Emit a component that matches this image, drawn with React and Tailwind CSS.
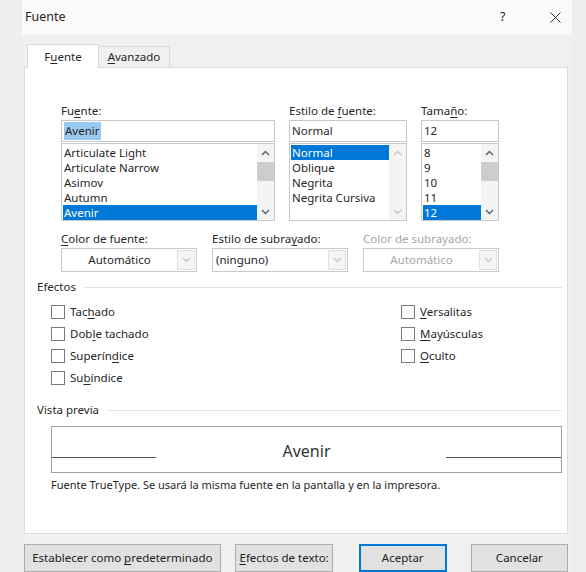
import { useState } from 'react'

// Diálogo "Fuente" estilo Word: listas, desplegables, efectos y vista previa.

const fuentes = ['Articulate Light', 'Articulate Narrow', 'Asimov', 'Autumn', 'Avenir']
const estilos = ['Normal', 'Oblique', 'Negrita', 'Negrita Cursiva']
const tamanos = ['8', '9', '10', '11', '12']

function U({ children }) {
  return <span className="underline underline-offset-[2px] decoration-[1px]">{children}</span>
}

function Chevron({ up, faint }) {
  return (
    <svg width="9" height="6" viewBox="0 0 9 6" className={faint ? 'opacity-30' : ''}>
      <polyline
        points={up ? '1,5 4.5,1.5 8,5' : '1,1 4.5,4.5 8,1'}
        fill="none" stroke="#606060" strokeWidth="1.4"
      />
    </svg>
  )
}

function ListBox({ items, selected, width, disabled }) {
  return (
    <div className="flex border border-[#c9c9c9] bg-white h-[78px] mt-[1px]" style={{ width }}>
      <div className="flex-1 pt-[1px] pl-[1px]">
        {items.map(it => (
          <div
            key={it}
            className={`h-[15px] leading-[15px] pl-[1px] ${it === selected ? 'bg-[#0078d7] text-white' : ''}`}
          >
            {it}
          </div>
        ))}
      </div>
      <div className="w-[17px] flex flex-col items-center bg-[#f4f4f4]">
        <div className="h-[17px] flex items-center justify-center"><Chevron up faint={disabled} /></div>
        {!disabled && <div className="w-[17px] h-[19px] bg-[#cdcdcd] mt-[1px]" />}
        <div className="flex-1" />
        <div className="h-[17px] flex items-center justify-center"><Chevron faint={disabled} /></div>
      </div>
    </div>
  )
}

function Picker({ label, value, items, selected, width, highlight, disabled }) {
  return (
    <div className="flex flex-col">
      <div className="h-[16px] leading-[16px] mb-[1px]">{label}</div>
      <div className="h-[22px] border border-[#c9c9c9] bg-white flex items-center pl-[2px]" style={{ width }}>
        <span className={highlight ? 'bg-[#99c9ef] px-[1px]' : ''}>{value}</span>
      </div>
      <ListBox items={items} selected={selected} width={width} disabled={disabled} />
    </div>
  )
}

function Dropdown({ label, value, center, disabled }) {
  return (
    <div className={`flex flex-col w-[136px] ${disabled ? 'text-[#a6a6a6]' : ''}`}>
      <div className="h-[16px] leading-[16px] mb-[1px]">{label}</div>
      <div className="h-[24px] border border-[#c9c9c9] bg-white flex items-center">
        <div className={`flex-1 ${center ? 'text-center' : 'pl-[3px]'}`}>{value}</div>
        <div className="w-[18px] h-[20px] mr-[1px] border border-[#e0e0e0] bg-[#f5f5f5] flex items-center justify-center">
          <Chevron faint />
        </div>
      </div>
    </div>
  )
}

function Check({ children }) {
  const [on, setOn] = useState(false)
  return (
    <label className="h-[22px] flex items-center gap-[5px] cursor-pointer" onClick={() => setOn(!on)}>
      <span className="w-[14px] h-[14px] border border-[#7a7a7a] bg-white flex items-center justify-center text-[10px]">
        {on ? '✓' : ''}
      </span>
      <span>{children}</span>
    </label>
  )
}

function Grupo({ title }) {
  return (
    <div className="flex items-center gap-[8px] h-[16px]">
      <span>{title}</span>
      <div className="flex-1 h-px bg-[#e3e3e3]" />
    </div>
  )
}

function Boton({ children, primary, width }) {
  return (
    <button
      className={`h-[28px] border bg-[#e1e1e1] text-[#222] ${primary ? 'border-[#0078d7] border-2' : 'border-[#adadad]'}`}
      style={{ width }}
    >
      {children}
    </button>
  )
}

export default function App() {
  return (
    <div
      className="w-[586px] h-[572px] overflow-hidden bg-[#eeeeee] flex text-[11.5px] text-[#262626]"
      style={{ fontFamily: '"Noto Sans", "Open Sans", sans-serif' }}
    >
      <div className="w-[22px]" />
      <div className="w-[550px] flex flex-col">
        {/* barra de título */}
        <div className="h-[41px] bg-[#fafafa] flex items-center pl-[3px] pr-[11px] text-[12.5px]">
          <span className="flex-1">Fuente</span>
          <span className="w-[10px] mr-[40px]">?</span>
          <svg width="11" height="11" viewBox="0 0 11 11">
            <path d="M0.5 0.5 L10.5 10.5 M10.5 0.5 L0.5 10.5" stroke="#333" strokeWidth="1" />
          </svg>
        </div>

        <div className="flex-1 bg-[#f0f0f0] pl-[2px] pr-[4px] pt-[8px] flex flex-col">
          {/* pestañas */}
          <div className="flex items-end pl-[3px] h-[24px]">
            <div className="w-[72px] h-[24px] bg-white border border-b-0 border-[#d9d9d9] flex items-center justify-center -mb-px relative z-10">
              F<U>u</U>ente
            </div>
            <div className="w-[71px] h-[21px] bg-[#f0f0f0] border border-l-0 border-b-0 border-[#d9d9d9] flex items-center justify-center">
              <U>A</U>vanzado
            </div>
          </div>

          {/* panel */}
          <div className="h-[467px] bg-white border border-[#dcdcdc] flex flex-col pt-[35px]">
            <div className="flex gap-[14px] pl-[36px]">
              <Picker
                label={<>Fu<U>e</U>nte:</>}
                value="Avenir" items={fuentes} selected="Avenir" width={214} highlight
              />
              <Picker
                label={<>Estilo de <U>f</U>uente:</>}
                value="Normal" items={estilos} selected="Normal" width={118} disabled
              />
              <Picker
                label={<>Tama<U>ñ</U>o:</>}
                value="12" items={tamanos} selected="12" width={78}
              />
            </div>

            <div className="flex gap-[15px] pl-[36px] mt-[10px]">
              <Dropdown label={<><U>C</U>olor de fuente:</>} value="Automático" center />
              <Dropdown label={<>Estilo de subra<U>y</U>ado:</>} value="(ninguno)" />
              <Dropdown label="Color de subrayado:" value="Automático" center disabled />
            </div>

            <div className="pl-[12px] pr-[5px] mt-[7px]">
              <Grupo title="Efectos" />
            </div>
            <div className="flex pl-[26px] mt-[6px]">
              <div className="w-[350px] flex flex-col">
                <Check>Tac<U>h</U>ado</Check>
                <Check>Dob<U>l</U>e tachado</Check>
                <Check>Superín<U>d</U>ice</Check>
                <Check>Su<U>b</U>índice</Check>
              </div>
              <div className="flex flex-col">
                <Check><U>V</U>ersalitas</Check>
                <Check><U>M</U>ayúsculas</Check>
                <Check><U>O</U>culto</Check>
              </div>
            </div>

            <div className="pl-[12px] pr-[5px] mt-[13px]">
              <Grupo title="Vista previa" />
            </div>
            <div className="ml-[26px] mr-[5px] mt-[8px] h-[47px] border border-[#a0a0a0] flex items-center relative">
              <div className="absolute left-0 top-[30px] w-[104px] h-px bg-[#555]" />
              <div className="absolute right-0 top-[30px] w-[115px] h-px bg-[#555]" />
              <div className="flex-1 text-center text-[16px] text-[#333] pt-[2px]">Avenir</div>
            </div>
            <div className="pl-[26px] mt-[4px] text-[11px]">
              Fuente TrueType. Se usará la misma fuente en la pantalla y en la impresora.
            </div>
          </div>

          {/* botones */}
          <div className="flex mt-[10px]">
            <Boton width={198}>Establecer como <U>p</U>redeterminado</Boton>
            <div className="w-[15px]" />
            <Boton width={98}><U>E</U>fectos de texto:</Boton>
            <div className="w-[26px]" />
            <Boton width={89} primary>Aceptar</Boton>
            <div className="w-[24px]" />
            <Boton width={98}>Cancelar</Boton>
          </div>
        </div>
      </div>
    </div>
  )
}
